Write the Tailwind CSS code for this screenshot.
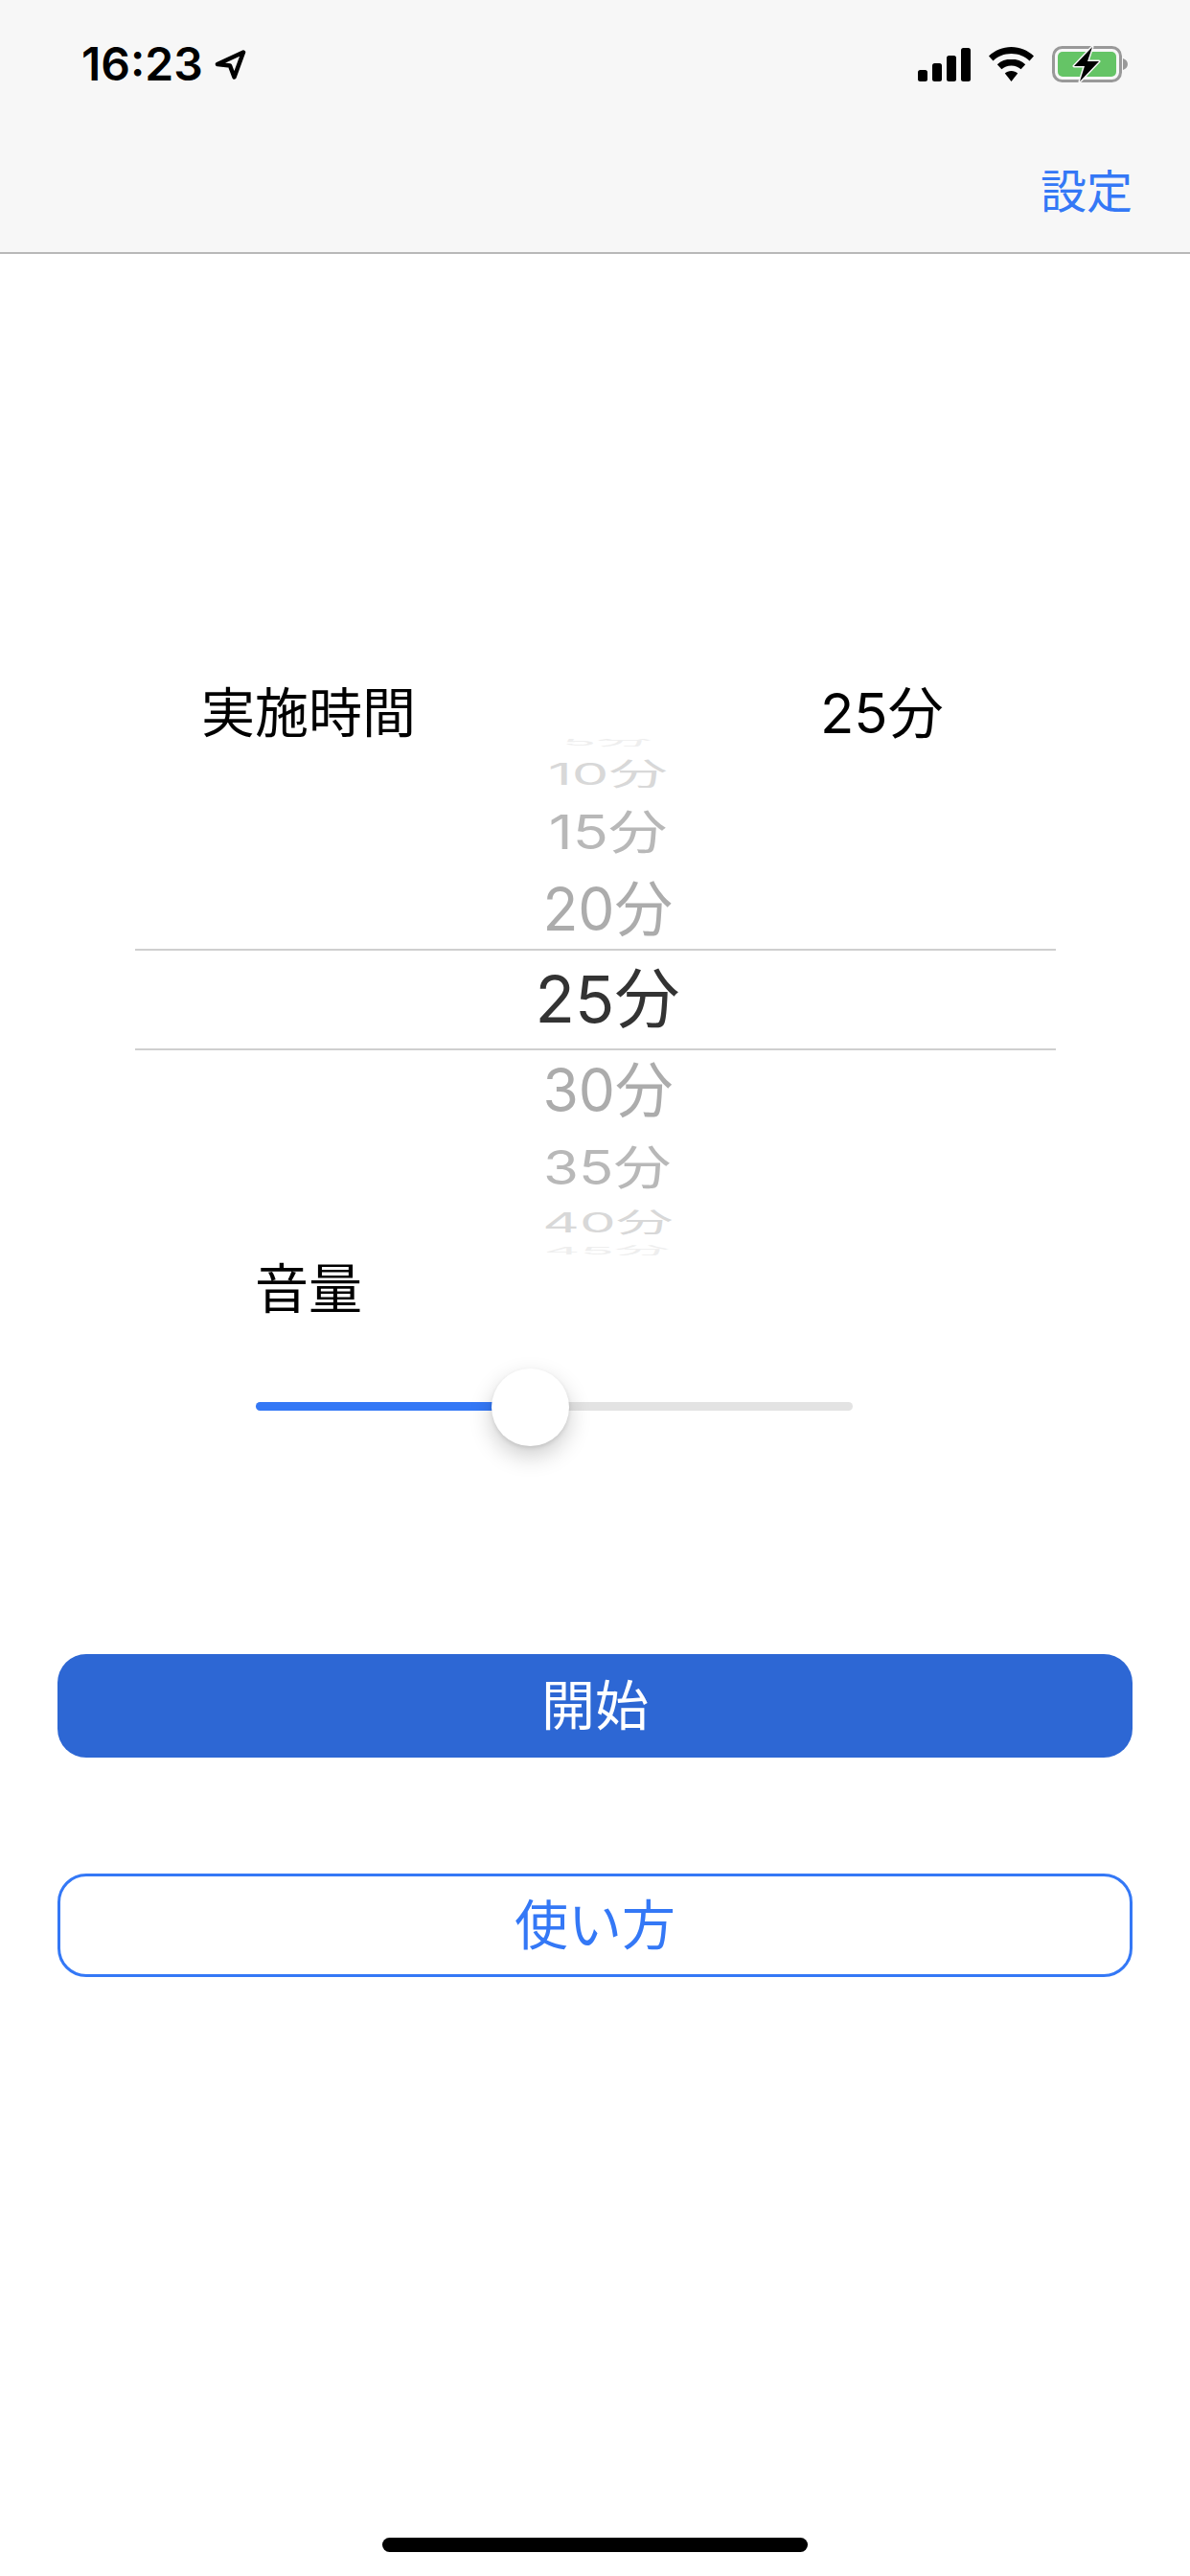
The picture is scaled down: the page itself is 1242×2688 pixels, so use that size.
<!DOCTYPE html>
<html lang="ja">
<head>
    <meta charset="UTF-8">
    <meta name="viewport" content="width=device-width, initial-scale=1.0">
    <title>Timer</title>
    <script src="https://cdn.jsdelivr.net/npm/@tailwindcss/browser@4"></script>
</head>
<body class="bg-white font-['Inter','Noto_Sans_CJK_JP',sans-serif]">
    <div class="relative w-[1242px] h-[2688px] overflow-hidden flex flex-col">
        <!-- Nav bar -->
        <header class="h-[265px] shrink-0 bg-[#f7f7f7] border-b-2 border-[#b8b8b8] flex flex-col">
            <div class="h-[134px] pl-[85px] pr-[65px] flex items-center justify-between">
                <div class="flex items-center gap-[12px]">
                    <span class="font-semibold text-[48px] leading-none text-black">16:23</span>
                    <svg class="w-[33px] h-[31px]" viewBox="0 0 33 31"><path d="M30 2.500 3 15l13 1.500L20.500 28.500Z" fill="none" stroke="#000" stroke-width="4.500" stroke-linejoin="round"/></svg>
                </div>
                <div class="flex items-center gap-[19px]">
                    <svg class="w-[55px] h-[35px]" viewBox="0 0 55 35" fill="#000">
                        <rect x="0" y="23" width="10" height="12" rx="2.500"/>
                        <rect x="15" y="16" width="10" height="19" rx="2.500"/>
                        <rect x="30" y="8" width="10" height="27" rx="2.500"/>
                        <rect x="45" y="0" width="10" height="35" rx="2.500"/>
                    </svg>
                    <svg class="w-[47px] h-[36px]" viewBox="0 0 47 36" fill="#000">
                        <path d="M23.500 0C14.500 0 6.500 3.500 0 9.500l4.500 5C9.500 9.700 16 7 23.500 7s14 2.700 19 7.500l4.500-5C40.500 3.500 32.500 0 23.500 0Z"/>
                        <path d="M23.500 12.500c-5.700 0-10.700 2.200-14.700 5.800l4.600 5c2.700-2.400 6.200-3.800 10.100-3.800s7.400 1.400 10.100 3.800l4.600-5c-4-3.600-9-5.800-14.700-5.800Z"/>
                        <path d="M23.500 25c-2.700 0-5 1-6.700 2.600l6.700 8.400 6.700-8.400C28.500 26 26.200 25 23.500 25Z"/>
                    </svg>
                    <svg class="w-[79px] h-[38px]" viewBox="0 0 79 38">
                        <rect x="1.500" y="1.500" width="70" height="35" rx="9" fill="none" stroke="#999" stroke-width="3"/>
                        <rect x="6" y="6" width="61" height="26" rx="5" fill="#65c466"/>
                        <path d="M74 13c3 1 5 3 5 6s-2 5-5 6Z" fill="#999"/>
                        <path d="M42 1 23 21h11l-5 16 20-21H37Z" fill="#000" stroke="#f7f7f7" stroke-width="3" paint-order="stroke" stroke-linejoin="round"/>
                    </svg>
                </div>
            </div>
            <div class="flex-1 flex items-center justify-end pr-[60px] pt-[2px]">
                <span class="text-[48px] leading-none text-[#3478f6]">設定</span>
            </div>
        </header>

        <!-- Duration label -->
        <div class="mt-[449px] h-[60px] flex items-center text-[56px] leading-none text-black">
            <span class="ml-[210px] w-[646px]">実施時間</span>
            <span class="text-[58px]">25分</span>
        </div>

        <!-- Picker -->
        <div class="relative mt-[-3px] ml-[141px] w-[961px] h-[539px] overflow-hidden text-[68px] leading-none text-[#acacac]">
            <div class="absolute inset-x-0 top-[219px] h-[106px] border-y-2 border-[#cfcfcf]"></div>
            <div class="mt-[-12px] h-[30px] flex items-center justify-center pl-[25px] text-[#eeeeee]"><span class="scale-x-[.86] scale-y-[.16]">5分</span></div>
            <div class="h-[38px] flex items-center justify-center pl-[25px] text-[#d8d8d8]"><span class="scale-x-[.9] scale-y-[.46]">10分</span></div>
            <div class="h-[82px] flex items-center justify-center pl-[25px] text-[#b8b8b8]"><span class="scale-x-[.9] scale-y-[.72]">15分</span></div>
            <div class="h-[78px] flex items-center justify-center pl-[25px]"><span class="scale-x-[.89] scale-y-[.92]">20分</span></div>
            <div class="h-[110px] flex items-center justify-center pl-[25px] text-[#333333]"><span>25分</span></div>
            <div class="h-[80px] flex items-center justify-center pl-[25px]"><span class="scale-x-[.89] scale-y-[.92]">30分</span></div>
            <div class="h-[82px] flex items-center justify-center pl-[25px] text-[#b8b8b8]"><span class="scale-x-[.88] scale-y-[.72]">35分</span></div>
            <div class="h-[34px] flex items-center justify-center pl-[25px] text-[#d8d8d8]"><span class="scale-x-[.88] scale-y-[.42]">40分</span></div>
            <div class="h-[24px] flex items-center justify-center pl-[25px] text-[#eeeeee]"><span class="scale-x-[.86] scale-y-[.16]">45分</span></div>
        </div>

        <!-- Volume -->
        <div class="mt-[7px] ml-[266px] text-[56px] leading-none text-black">音量</div>
        <div class="mt-[90px] ml-[267px] w-[623px] h-[9px] rounded-full bg-[#e3e3e3] relative">
            <div class="w-[287px] h-full rounded-l-full bg-[#3478f6]"></div>
            <div class="absolute left-[246px] top-[-35px] w-[81px] h-[81px] rounded-full bg-white shadow-[0_10px_24px_rgba(0,0,0,0.2),0_2px_4px_rgba(0,0,0,0.1)]"></div>
        </div>

        <!-- Buttons -->
        <button class="mt-[254px] mx-[60px] h-[108px] rounded-[30px] bg-[#2d67d4] text-white text-[56px] leading-none">開始</button>
        <button class="mt-[121px] mx-[60px] h-[108px] rounded-[30px] border-[3px] border-[#3478f6] bg-white text-[#3478f6] text-[56px] leading-none">使い方</button>

        <!-- Home indicator -->
        <div class="absolute left-[399px] top-[2648px] w-[444px] h-[15px] rounded-full bg-black"></div>
    </div>
</body>
</html>
